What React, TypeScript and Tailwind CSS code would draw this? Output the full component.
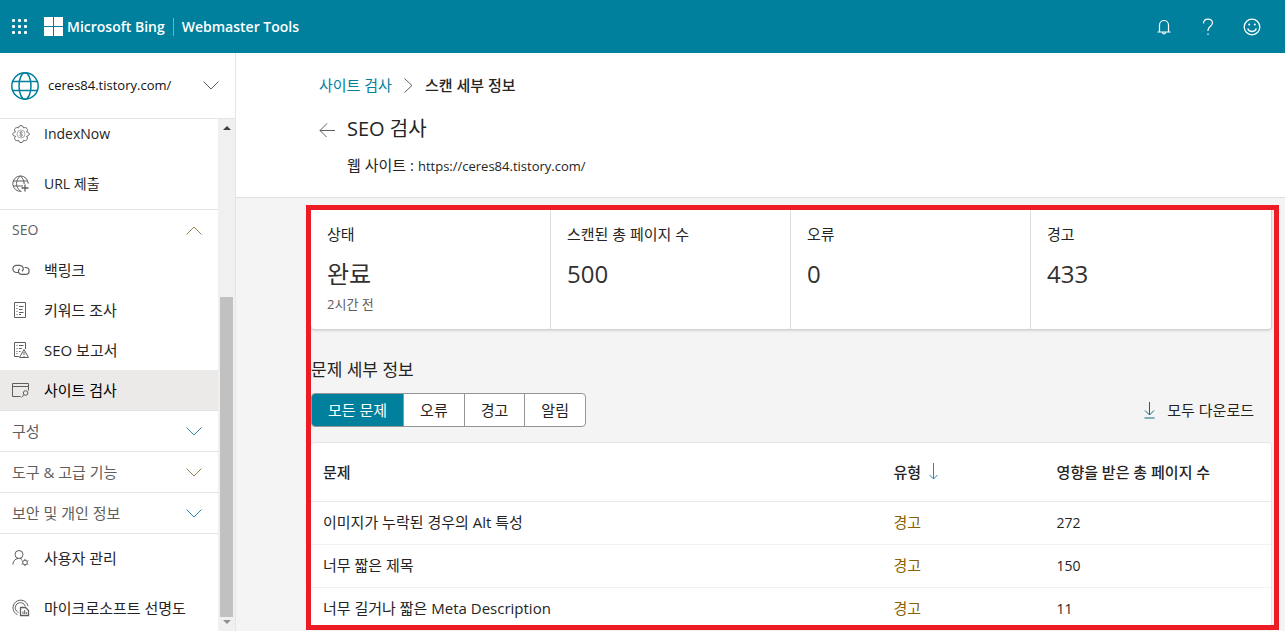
import { useState } from 'react'
import type { ReactNode } from 'react'
import clsx from 'clsx'

interface IconProps {
  children: ReactNode
  className?: string
  size?: number
}

function Icon({ children, className, size = 18 }: IconProps) {
  return (
    <svg
      width={size}
      height={size}
      viewBox={`0 0 ${size} ${size}`}
      fill="none"
      stroke="currentColor"
      strokeWidth="1"
      className={clsx('shrink-0', className)}
      aria-hidden="true"
    >
      {children}
    </svg>
  )
}

const IndexNowIcon = () => (
  <Icon>
    <path d="M9 .6c1.6 0 2.2 1 2.5 2.3 1.3-.5 2.6-.5 3.5.7.9 1.3.3 2.4-.5 3.300 1.300.3 2.700.8 2.700 2.200s-1.400 1.900-2.700 2.200c.8.9 1.400 2 .5 3.300-.9 1.200-2.200 1.200-3.500.7-.3 1.300-.9 2.300-2.500 2.300s-2.200-1-2.500-2.300c-1.300.5-2.600.5-3.500-.7-.9-1.300-.3-2.400.5-3.300C2.200 11 .8 10.500.8 9.100s1.400-1.900 2.700-2.200c-.8-.9-1.400-2-.5-3.300.9-1.200 2.200-1.200 3.500-.7C6.800 1.600 7.400.6 9 .6z" />
    <circle cx="9" cy="9" r="4" strokeOpacity=".5" />
    <path d="M10.600 7.500c-.8-.9-3-.8-3 .4 0 1.400 3 .8 3 2.200 0 1.200-2.300 1.300-3.200.3M9 6v6" strokeOpacity=".6" />
  </Icon>
)

const UrlIcon = () => (
  <Icon>
    <path d="M9.500 16.300A7.700 7.700 0 1 1 16.200 8.700M1 6h14.500M1 11h10M8.300 1C3.300 5 3.300 12 8.300 16M8.300 1c2.700 2.200 3.800 4.800 3.900 8" />
    <path d="M13 9.500v7M9.500 13h7" strokeWidth="1.300" />
  </Icon>
)

const LinkIcon = () => (
  <Icon>
    <path d="M6 11.500H4.500a3.600 3.600 0 0 1 0-7.200h3.200c3.600 0 4.700 4 2.300 6" strokeWidth="1.200" />
    <path d="M12.500 6.500h1.200a3.300 3.300 0 0 1 0 6.800H9.500c-3.300 0-4.200-3.600-1.700-5.500" strokeWidth="1.200" />
  </Icon>
)

const KeywordIcon = () => (
  <Icon>
    <path d="M2.500 1.500h11v15h-11zM7 5.500h4.500M7 8.500h3.500M7 11.500h4.500M7 13.500h2M4.500 4.500h1M4.500 7.500h1M4.500 10.500h1M4.500 13.500h1" />
  </Icon>
)

const ReportIcon = () => (
  <Icon>
    <path d="M7 15.500H2.500v-14h11V8M4.500 4.500h1M7 4.500h4.500M4.500 7.500h1M7 7.500h3M4.500 10.500h1M7 10.500h1.500M4.500 12.500h1" />
    <path d="M12 8.500l4.500 8h-9zM12 11v3M12 15v1" />
  </Icon>
)

const ScanIcon = () => (
  <Icon>
    <path d="M8.500 15.500h-8v-13h16v7M.5 5.500h16" />
    <circle cx="13.600" cy="12" r="2.300" />
    <path d="M12 13.600L9.500 16.500" />
  </Icon>
)

const UserIcon = () => (
  <Icon>
    <circle cx="7" cy="5.500" r="4" />
    <path d="M.8 15.500c.4-3.500 2.400-5.800 5.200-6M8 9.500c.8.2 1.400.5 2 1" />
    <circle cx="13" cy="13.500" r="2.300" />
    <path d="M13 10v1.200M13 15.800V17M9.700 11.700l1.200.7M15.100 14.700l1.200.7M9.700 15.300l1.200-.7M15.100 12.400l1.200-.7" />
  </Icon>
)

const ClarityIcon = () => (
  <Icon>
    <path d="M5.500 15.700A7.600 7.600 0 1 1 16 7" />
    <path d="M6.500 13.500a5.100 5.100 0 1 1 6.800-6.200" />
    <path d="M8.500 8.500h5l3 3v5h-8z" strokeWidth="1.300" />
    <path d="M11 12.500V15M12.700 11V15M14.300 13v2" />
  </Icon>
)

const GlobeIcon = () => (
  <svg width="30" height="30" viewBox="0 0 30 30" fill="none" stroke="#007f9d" strokeWidth="1.500" className="shrink-0" aria-hidden="true">
    <circle cx="15" cy="15" r="13.200" />
    <ellipse cx="15" cy="15" rx="6" ry="13.200" />
    <path d="M2.500 10.500h25M2.500 19.500h25" />
  </svg>
)

function Chevron({ up, className }: { up?: boolean; className?: string }) {
  return (
    <svg width="16" height="9" viewBox="0 0 16 9" fill="none" stroke="currentColor" className={clsx('shrink-0', className)} aria-hidden="true">
      <path d={up ? 'M.5 8.500L8 1l7.500 7.500' : 'M.5.5L8 8 15.500.5'} />
    </svg>
  )
}

const topItems = [
  { label: 'IndexNow', icon: <IndexNowIcon /> },
  { label: 'URL 제출', icon: <UrlIcon /> },
]

const seoItems = [
  { label: '백링크', icon: <LinkIcon /> },
  { label: '키워드 조사', icon: <KeywordIcon /> },
  { label: 'SEO 보고서', icon: <ReportIcon /> },
  { label: '사이트 검사', icon: <ScanIcon />, active: true },
]

const closedSections = [
  { label: '구성', color: 'text-[#2f86ad]' },
  { label: '도구 & 고급 기능', color: 'text-[#9a8252]' },
  { label: '보안 및 개인 정보', color: 'text-[#2f86ad]' },
]

const bottomItems = [
  { label: '사용자 관리', icon: <UserIcon /> },
  { label: '마이크로소프트 선명도', icon: <ClarityIcon /> },
]

const stats = [
  { label: '상태', value: '완료', note: '2시간 전' },
  { label: '스캔된 총 페이지 수', value: '500' },
  { label: '오류', value: '0' },
  { label: '경고', value: '433' },
]

const filters = ['모든 문제', '오류', '경고', '알림']

const issues = [
  { name: '이미지가 누락된 경우의 Alt 특성', type: '경고', pages: 272 },
  { name: '너무 짧은 제목', type: '경고', pages: 150 },
  { name: '너무 길거나 짧은 Meta Description', type: '경고', pages: 11 },
]

interface NavItemProps {
  label: string
  icon: ReactNode
  active?: boolean
  className?: string
}

function NavItem({ label, icon, active, className }: NavItemProps) {
  return (
    <a
      href="#"
      className={clsx('flex items-center gap-3.5 pl-3', active ? 'bg-[#ebeae9] text-black' : 'text-[#252423]', className)}
    >
      <span className="text-[#605e5c]">{icon}</span>
      <span>{label}</span>
    </a>
  )
}

function Header() {
  return (
    <header className="flex h-[53px] shrink-0 items-center bg-[#00809d] pr-6 pl-3 text-white">
      <button type="button" aria-label="앱 시작 관리자">
        <svg width="16" height="16" viewBox="0 0 16 16" fill="currentColor" aria-hidden="true">
          {[0, 6, 12].map((y) => [0, 6, 12].map((x) => <rect key={`${x}-${y}`} x={x} y={y} width="3" height="3" rx="1" />))}
        </svg>
      </button>
      <svg width="19" height="19" viewBox="0 0 19 19" fill="currentColor" className="ml-4" aria-hidden="true">
        <path d="M0 0h9v9H0zM10 0h9v9h-9zM0 10h9v9H0zM10 10h9v9h-9z" />
      </svg>
      <span className="ml-1 text-sm font-semibold">Microsoft Bing</span>
      <span className="mx-2 h-[18px] w-px bg-white/40" />
      <span className="text-sm font-semibold">Webmaster Tools</span>
      <div className="ml-auto flex items-center gap-[26px]">
        <button type="button" aria-label="알림">
          <Icon>
            <path d="M4.500 14V7a4.500 4.500 0 0 1 9 0v7M2.500 14h13M7.500 14.500c.3 1.800 2.700 1.800 3 0" strokeWidth="1.200" />
          </Icon>
        </button>
        <button type="button" aria-label="도움말">
          <Icon>
            <path d="M4.500 5.500C4.500-.3 13.500-.3 13.500 5c0 3-4.500 4-4.500 7v1M9 15.500V17" strokeWidth="1.200" />
          </Icon>
        </button>
        <button type="button" aria-label="피드백">
          <Icon>
            <circle cx="9" cy="9" r="7.800" strokeWidth="1.300" />
            <path d="M4.700 10.500c1.200 4 7.400 4 8.600 0" strokeWidth="1.300" />
            <circle cx="6.200" cy="6.500" r="1" fill="currentColor" stroke="none" />
            <circle cx="11.800" cy="6.500" r="1" fill="currentColor" stroke="none" />
          </Icon>
        </button>
      </div>
    </header>
  )
}

function Sidebar() {
  return (
    <aside className="flex w-[236px] shrink-0 flex-col border-r border-[#e5e5e5] bg-white">
      <button type="button" className="flex h-[66px] shrink-0 items-center gap-2 border-b border-[#e5e5e5] pr-4 pl-2.5 text-left text-[13px] text-[#111]">
        <GlobeIcon />
        <span className="flex-1">ceres84.tistory.com/</span>
        <Chevron className="text-[#605e5c]" />
      </button>
      <div className="flex min-h-0 flex-1">
        <nav className="min-w-0 flex-1 overflow-hidden text-[15px]">
          <div className="flex flex-col gap-5 border-b border-[#e5e5e5] pb-2.5 text-sm">
            {topItems.map((item) => (
              <NavItem key={item.label} {...item} className="h-[30px]" />
            ))}
          </div>
          <div className="border-b border-[#e5e5e5]">
            <button type="button" className="flex h-10 w-full items-center justify-between pr-4 pl-3 text-sm text-[#605e5c]">
              SEO
              <Chevron up className="text-[#9a8252]" />
            </button>
            {seoItems.map((item) => (
              <NavItem key={item.label} {...item} className="h-10" />
            ))}
          </div>
          {closedSections.map((section) => (
            <button
              key={section.label}
              type="button"
              className="flex h-[41px] w-full items-center justify-between border-b border-[#e5e5e5] pr-4 pl-3 text-[#605e5c]"
            >
              {section.label}
              <Chevron className={section.color} />
            </button>
          ))}
          <div className="flex flex-col gap-5 pt-[9px]">
            {bottomItems.map((item) => (
              <NavItem key={item.label} {...item} className="h-[30px]" />
            ))}
          </div>
        </nav>
        {/* Scrollbar */}
        <div className="flex w-[17px] shrink-0 flex-col items-center bg-[#f0f0f0] py-1.5">
          <svg width="8" height="5" viewBox="0 0 8 5" fill="#404040" aria-hidden="true">
            <path d="M0 5l4-4 4 4z" />
          </svg>
          <div className="flex-1" />
          <div className="mb-[3px] h-[64%] w-[13px] bg-[#c1c1c1]" />
          <svg width="8" height="5" viewBox="0 0 8 5" fill="#909090" aria-hidden="true">
            <path d="M0 0h8L4 4z" />
          </svg>
        </div>
      </div>
    </aside>
  )
}

export default function App() {
  const [filter, setFilter] = useState(filters[0])

  return (
    <div className="flex h-screen flex-col overflow-hidden bg-[#f4f4f4] font-['Open_Sans','Noto_Sans_CJK_KR',sans-serif] text-[#252423]">
      <Header />
      <div className="flex min-h-0 flex-1">
        <Sidebar />
        <main className="flex min-w-0 flex-1 flex-col">
          <div className="h-[145px] shrink-0 border-b border-[#dedede] bg-white pt-[22px] pl-[83px]">
            <nav className="flex items-center gap-3 text-[15px] leading-5">
              <a href="#" className="text-[#00809d]">
                사이트 검사
              </a>
              <svg width="9" height="15" viewBox="0 0 9 15" fill="none" stroke="#605e5c" aria-hidden="true">
                <path d="M.5.5l7.500 7-7.500 7" />
              </svg>
              <span className="font-medium">스캔 세부 정보</span>
            </nav>
            <div className="mt-5 flex items-center gap-3">
              <button type="button" aria-label="뒤로">
                <svg width="16" height="15" viewBox="0 0 16 15" fill="none" stroke="#605e5c" aria-hidden="true">
                  <path d="M16 8.500H1M8 1.500l-7 7 7 7" />
                </svg>
              </button>
              <h1 className="text-xl leading-7">SEO 검사</h1>
            </div>
            <p className="mt-3 flex items-baseline gap-1 pl-7 text-[15px] leading-5">
              웹 사이트 :<span className="text-[13px]">https://ceres84.tistory.com/</span>
            </p>
          </div>

          <div className="relative min-h-0 flex-1 pt-2 pr-[13px] pl-[75px]">
            <div className="grid h-[124px] grid-cols-4 rounded-sm border-r border-b border-[#d2d2d2] bg-white shadow-sm">
              {stats.map((stat) => (
                <div key={stat.label} className="border-r border-[#dedede] px-4 pt-[18px] last:border-r-0">
                  <div className="text-[15px] leading-5">{stat.label}</div>
                  <div className="mt-3 text-2xl leading-9 text-[#323130]">{stat.value}</div>
                  {stat.note && <div className="mt-1 text-[13px] leading-4 text-[#605e5c]">{stat.note}</div>}
                </div>
              ))}
            </div>

            <h2 className="mt-7 text-[17px] leading-6">문제 세부 정보</h2>
            <div className="mt-[11px] flex items-center justify-between">
              <div className="flex h-[34px] overflow-hidden rounded border border-[#979593] bg-white text-[15px]">
                {filters.map((name) => (
                  <button
                    key={name}
                    type="button"
                    onClick={() => setFilter(name)}
                    className={clsx(
                      'border-r border-[#979593] px-4 last:border-r-0',
                      filter === name && 'bg-[#00809d] text-white',
                    )}
                  >
                    {name}
                  </button>
                ))}
              </div>
              <button type="button" className="flex items-center gap-3 pr-[18px] text-[15px]">
                <svg width="11" height="17" viewBox="0 0 11 17" fill="none" stroke="#0b6a80" aria-hidden="true">
                  <path d="M5.500 0v12.500M1 8.500L5.500 13 10 8.500M.5 16h10" />
                </svg>
                모두 다운로드
              </button>
            </div>

            <div className="mt-[15px] rounded-sm border-t border-r border-[#e5e5e5] bg-white">
              <table className="w-full table-fixed text-left text-[15px]">
                <thead>
                  <tr className="h-[58px] border-b border-[#e8e8e8]">
                    <th className="w-[59%] pl-3 font-medium">문제</th>
                    <th className="w-[17%] pl-4 font-medium">
                      <span className="flex items-center gap-2">
                        유형
                        <svg width="9" height="17" viewBox="0 0 9 17" fill="none" stroke="#2f86ad" aria-hidden="true">
                          <path d="M4.500 0v16M.5 12l4 4 4-4" />
                        </svg>
                      </span>
                    </th>
                    <th className="pl-4 font-medium">영향을 받은 총 페이지 수</th>
                  </tr>
                </thead>
                <tbody>
                  {issues.map((issue) => (
                    <tr key={issue.name} className="h-[43px] border-b border-[#f0f0f0]">
                      <td className="pl-3">{issue.name}</td>
                      <td className="pl-4 text-[#8a6100]">{issue.type}</td>
                      <td className="pl-4 text-sm">{issue.pages}</td>
                    </tr>
                  ))}
                </tbody>
              </table>
            </div>

            {/* Highlight frame over the scan results */}
            <div className="pointer-events-none absolute top-[7px] right-1.5 bottom-px left-[70px] border-5 border-[#ed1c24]" />
          </div>
        </main>
      </div>
    </div>
  )
}
